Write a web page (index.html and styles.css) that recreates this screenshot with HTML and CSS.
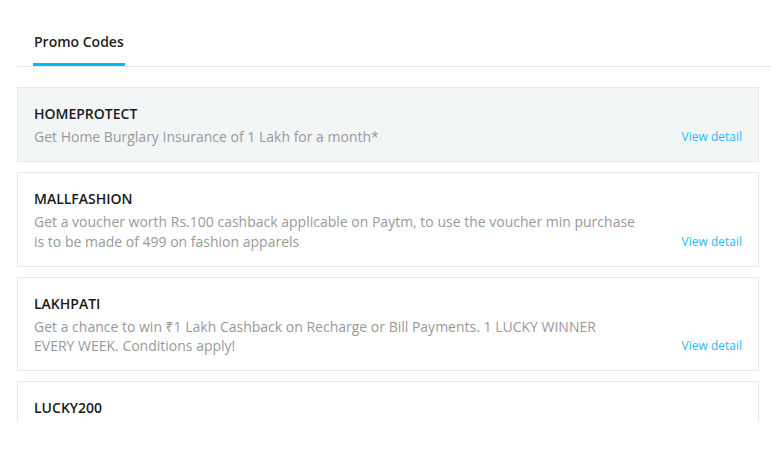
FILE: index.html
```html
<!DOCTYPE html>
<html>
<head>
<meta charset="utf-8">
<link rel="stylesheet" href="styles.css">
</head>
<body>
<div class="page">
  <div class="tabs">
    <div class="tab active">Promo Codes</div>
  </div>
  <div class="list">
    <div class="card selected">
      <div class="info">
        <div class="code">HOMEPROTECT</div>
        <div class="desc">Get Home Burglary Insurance of 1 Lakh for a month*</div>
      </div>
      <a class="detail">View detail</a>
    </div>
    <div class="card">
      <div class="info">
        <div class="code">MALLFASHION</div>
        <div class="desc">Get a voucher worth Rs.100 cashback applicable on Paytm, to use the voucher min purchase is to be made of 499 on fashion apparels</div>
      </div>
      <a class="detail">View detail</a>
    </div>
    <div class="card">
      <div class="info">
        <div class="code">LAKHPATI</div>
        <div class="desc">Get a chance to win ₹1 Lakh Cashback on Recharge or Bill Payments. 1 LUCKY WINNER EVERY WEEK. Conditions apply!</div>
      </div>
      <a class="detail">View detail</a>
    </div>
    <div class="card">
      <div class="info">
        <div class="code">LUCKY200</div>
        <div class="desc">Get Rs.200 cashback on your first transaction above Rs.500 using Paytm Wallet</div>
      </div>
      <a class="detail">View detail</a>
    </div>
  </div>
</div>
</body>
</html>
```

FILE: styles.css
```css
* { box-sizing: border-box; }
html, body { margin: 0; padding: 0; background: #fff; }
body { font-family: "Open Sans", "Noto Sans", sans-serif; }
.page {
  height: 422px;
  overflow: hidden;
  padding-left: 17px;
  padding-top: 23px;
}
.tabs {
  display: flex;
  border-bottom: 1px solid #e8e8e8;
}
.tab {
  margin-left: 16px;
  padding: 9px 1px 12px 1px;
  font-size: 14px;
  line-height: 19px;
  font-weight: 600;
  color: #222;
  border-bottom: 3px solid transparent;
}
.tab.active { border-bottom-color: #00b9f5; }
.list {
  margin-top: 20px;
  margin-right: 12px;
  display: flex;
  flex-direction: column;
  gap: 10px;
}
.card {
  display: flex;
  align-items: flex-end;
  justify-content: space-between;
  border: 1px solid #e8e8e8;
  background: #fff;
  padding: 16px 16px 14.5px 16px;
}
.card.selected { background: #f3f6f7; }
.info { width: 604px; }
.code {
  font-size: 14px;
  font-weight: 600;
  line-height: 19px;
  color: #1a1a1a;
}
.desc {
  margin-top: 4px;
  font-size: 14px;
  line-height: 19.5px;
  color: #999;
}
.detail {
  font-size: 12px;
  line-height: 19.5px;
  color: #2bb8f3;
  cursor: pointer;
}
```
